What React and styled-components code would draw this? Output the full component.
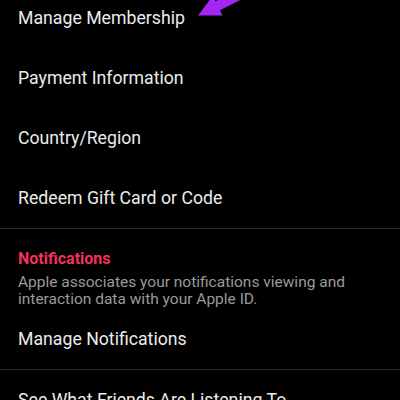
import React from "react";
import styled, { createGlobalStyle } from "styled-components";

const GlobalStyle = createGlobalStyle`
  html, body {
    margin: 0;
    padding: 0;
    background: #000;
  }
  body {
    font-family: Roboto, "Noto Sans", Arial, sans-serif;
    -webkit-font-smoothing: antialiased;
  }
`;

// Settings screen
const Screen = styled.div`
  position: relative;
  width: 400px;
  height: 400px;
  overflow: hidden;
  background: #000;
`;

const List = styled.div`
  display: flex;
  flex-direction: column;
  margin-top: -12px;
`;

const Row = styled.div`
  display: flex;
  align-items: center;
  height: 60px;
  padding: 0 18px;
  font-size: 17.7px;
  color: #ebebeb;
  white-space: nowrap;
  flex-shrink: 0;
`;

const Divider = styled.div`
  height: 1px;
  background: #2b2b2b;
  flex-shrink: 0;
`;

const Section = styled.div`
  display: flex;
  flex-direction: column;
  padding: 20px 18px 0;
`;

const SectionTitle = styled.div`
  font-size: 16px;
  font-weight: 700;
  line-height: 20px;
  color: #f0325c;
`;

const SectionNote = styled.div`
  margin-top: 4.5px;
  font-size: 15.5px;
  line-height: 17.5px;
  color: #9a9a9a;
  white-space: nowrap;
`;

// Purple annotation arrow drawn over the page
const Arrow = styled.svg`
  position: absolute;
  left: 0;
  top: 0;
  pointer-events: none;
`;

export default function App() {
  return (
    <Screen>
      <GlobalStyle />
      <List>
        <Row>Manage Membership</Row>
        <Row>Payment Information</Row>
        <Row>Country/Region</Row>
        <Row>Redeem Gift Card or Code</Row>
        <Divider />
        <Section>
          <SectionTitle>Notifications</SectionTitle>
          <SectionNote>
            Apple associates your notifications viewing and
            <br />
            interaction data with your Apple ID.
          </SectionNote>
        </Section>
        <Row>Manage Notifications</Row>
        <Divider />
        <Row>See What Friends Are Listening To</Row>
      </List>
      <Arrow width="400" height="40" viewBox="0 0 400 40">
        <polygon
          fill="#a326f2"
          points="198,15.5 222.6,15.5 219.9,10.2 262.8,-11.3 258.4,-20.3 215.5,1.2 212.8,-4.1"
        />
      </Arrow>
    </Screen>
  );
}
